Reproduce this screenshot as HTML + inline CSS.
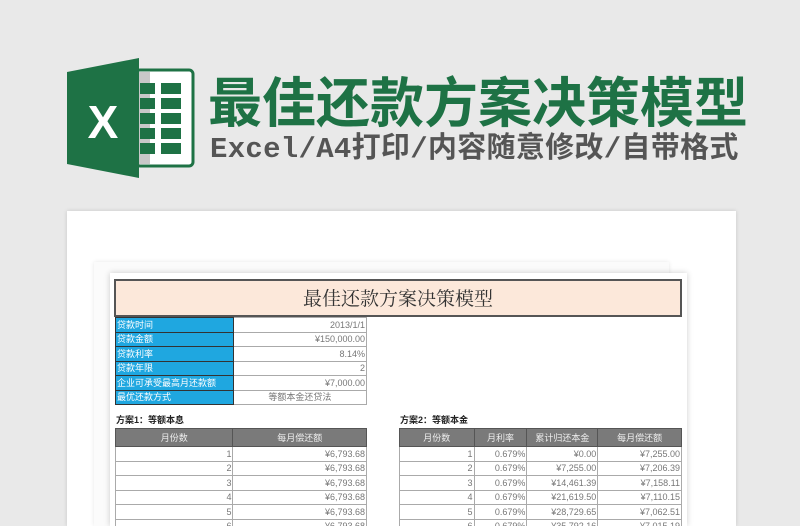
<!DOCTYPE html>
<html><head><meta charset="utf-8">
<style>
*{margin:0;padding:0;box-sizing:border-box}
html,body{width:800px;height:526px;overflow:hidden}
body{background:#e9e9e9;position:relative;font-family:"Liberation Sans","Noto Sans CJK SC",sans-serif}
.abs{position:absolute}
.title{left:208px;top:66px;font-size:54px;font-weight:bold;color:#1e7245;white-space:nowrap;line-height:66px;font-family:"Noto Sans CJK SC",sans-serif}
.sub{left:210px;top:131px;font-size:29px;color:#555;white-space:nowrap;line-height:38px;font-family:"Liberation Mono","Noto Sans CJK SC",monospace;font-weight:bold;letter-spacing:0.3px}
table{border-collapse:collapse;position:absolute;font-size:9px;color:#777;font-family:"Liberation Sans","Noto Sans CJK SC",sans-serif}
td{border:1px solid #aaa;height:14.5px;padding:0 1px;text-align:right;line-height:12px;white-space:nowrap;overflow:hidden}
th{background:#7a7a7a;color:#eee;font-weight:normal;height:18px;border:1px solid #555;font-size:9px}
.lab{background:#1fa7e0;color:#fff;text-align:left;border-color:#333}
</style></head><body>
<svg class="abs" style="left:60px;top:50px" width="140" height="130" viewBox="0 0 140 130">
<rect x="76" y="20" width="57" height="96" rx="4" fill="#fff" stroke="#1e7245" stroke-width="3"/>
<rect x="78" y="22" width="12" height="92" fill="#c8c8c8"/>
<g fill="#1e7245">
<rect x="80" y="33" width="15" height="11"/><rect x="101" y="33" width="20" height="11"/>
<rect x="80" y="48" width="15" height="11"/><rect x="101" y="48" width="20" height="11"/>
<rect x="80" y="63" width="15" height="11"/><rect x="101" y="63" width="20" height="11"/>
<rect x="80" y="78" width="15" height="11"/><rect x="101" y="78" width="20" height="11"/>
<rect x="80" y="93" width="15" height="11"/><rect x="101" y="93" width="20" height="11"/>
</g>
<polygon points="7,22 79,8 79,128 7,114" fill="#1e7245"/>
<text x="43" y="88" font-size="46" font-weight="bold" fill="#fff" text-anchor="middle" font-family="Liberation Sans,sans-serif">X</text>
</svg>
<div class="abs title">最佳还款方案决策模型</div>
<div class="abs sub">Excel/A4打印/内容随意修改/自带格式</div>

<div class="abs" style="left:67px;top:211px;width:669px;height:315px;background:#fff;box-shadow:0 0 4px rgba(0,0,0,.15)"></div>
<div class="abs" style="left:94px;top:262px;width:575px;height:264px;background:#fbfbfb;box-shadow:0 0 4px rgba(0,0,0,.1)"></div>
<div class="abs" style="left:110px;top:273px;width:577px;height:253px;background:#fff;box-shadow:0 0 6px rgba(0,0,0,.2)"></div>
<div class="abs" style="left:114px;top:279px;width:568px;height:38px;background:#fce8da;border:2px solid #555;text-align:center;font-size:19px;line-height:34px;color:#333;font-family:'Noto Serif CJK SC',serif">最佳还款方案决策模型</div>

<table style="left:115px;top:317px;width:252px;border:1.5px solid #333">
<colgroup><col style="width:118px"><col style="width:134px"></colgroup>
<tr><td class="lab">贷款时间</td><td>2013/1/1</td></tr>
<tr><td class="lab">贷款金额</td><td>¥150,000.00</td></tr>
<tr><td class="lab">贷款利率</td><td>8.14%</td></tr>
<tr><td class="lab">贷款年限</td><td>2</td></tr>
<tr><td class="lab">企业可承受最高月还款额</td><td>¥7,000.00</td></tr>
<tr><td class="lab">最优还款方式</td><td style="text-align:center">等额本金还贷法</td></tr>
</table>

<div class="abs" style="left:116px;top:413px;font-size:9px;font-weight:bold;color:#222">方案1：等额本息</div>
<div class="abs" style="left:400px;top:413px;font-size:9px;font-weight:bold;color:#222">方案2：等额本金</div>

<table style="left:115px;top:428px;width:252px;border:1.5px solid #333">
<colgroup><col style="width:118px"><col style="width:134px"></colgroup>
<tr><th>月份数</th><th>每月偿还额</th></tr>
<tr><td>1</td><td>¥6,793.68</td></tr>
<tr><td>2</td><td>¥6,793.68</td></tr>
<tr><td>3</td><td>¥6,793.68</td></tr>
<tr><td>4</td><td>¥6,793.68</td></tr>
<tr><td>5</td><td>¥6,793.68</td></tr>
<tr><td>6</td><td>¥6,793.68</td></tr>
</table>

<table style="left:399px;top:428px;width:283px;border:1.5px solid #333">
<colgroup><col style="width:75px"><col style="width:53px"><col style="width:71px"><col style="width:84px"></colgroup>
<tr><th>月份数</th><th>月利率</th><th>累计归还本金</th><th>每月偿还额</th></tr>
<tr><td>1</td><td>0.679%</td><td>¥0.00</td><td>¥7,255.00</td></tr>
<tr><td>2</td><td>0.679%</td><td>¥7,255.00</td><td>¥7,206.39</td></tr>
<tr><td>3</td><td>0.679%</td><td>¥14,461.39</td><td>¥7,158.11</td></tr>
<tr><td>4</td><td>0.679%</td><td>¥21,619.50</td><td>¥7,110.15</td></tr>
<tr><td>5</td><td>0.679%</td><td>¥28,729.65</td><td>¥7,062.51</td></tr>
<tr><td>6</td><td>0.679%</td><td>¥35,792.16</td><td>¥7,015.19</td></tr>
</table>
</body></html>
